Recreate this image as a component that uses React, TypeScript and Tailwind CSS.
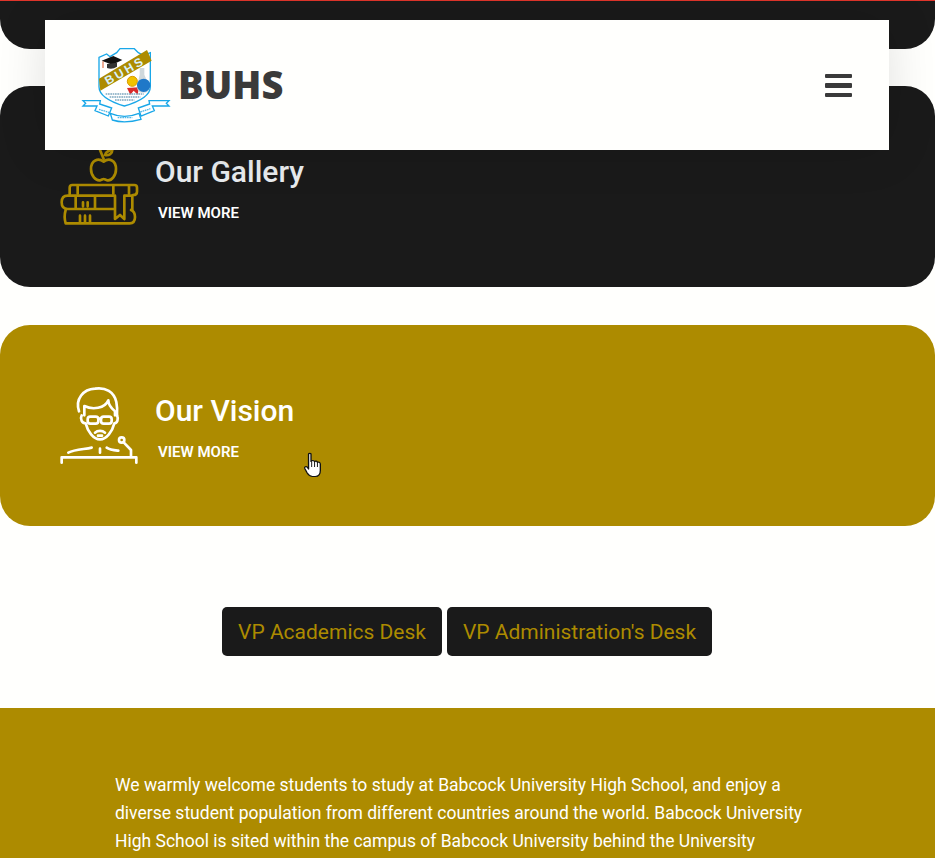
import { ReactNode } from "react";

const GOLD = "#ad8b00";

function BooksIcon() {
  return (
    <svg width="90" height="85" viewBox="0 -6 270 255" fill="none" stroke={GOLD} strokeWidth="8" strokeLinecap="round" strokeLinejoin="round">
      {/* apple */}
      <path d="M146 50C130 38 108 45 108 72C108 92 122 108 135 106C140 105 143 102 146 102C149 102 152 105 157 106C170 108 183 92 183 72C183 45 162 38 146 50Z" />
      <path d="M146 42L135 15M150 30C152 20 165 15 172 15C172 25 162 33 150 30Z" />
      {/* top book */}
      <path d="M44 148V128Q44 120 52 120H238Q246 120 246 128V140Q246 150 234 150M68 120V146M175 120V146M222 120V146" />
      {/* middle book */}
      <path d="M175 152H38Q20 152 20 172Q20 192 38 192H176M62 152V192M120 152V192M212 152H232V195M84 172V184M98 172V184" />
      {/* bookmark */}
      <path d="M180 152V222L195 210L208 222V152" />
      {/* bottom book */}
      <path d="M32 195Q26 215 32 235H224Q240 235 240 216Q240 200 228 195M75 212V235M90 212V235M105 212V235" />
    </svg>
  );
}

function TeacherIcon() {
  return (
    <svg width="90" height="85" viewBox="0 0 270 255" fill="none" stroke="#ffffff" strokeWidth="8" strokeLinecap="round" strokeLinejoin="round">
      <path d="M72 88C60 50 85 22 120 20C152 15 177 30 184 60C187 75 187 88 186 100" />
      <path d="M88 100V72C112 84 150 80 160 55C160 70 170 80 180 88V100" />
      <path d="M80 100C74 112 82 124 92 124C98 148 115 172 135 172C155 172 172 148 178 124C186 124 192 112 186 100" />
      <rect x="98" y="104" width="32" height="21" rx="8" />
      <rect x="138" y="104" width="32" height="21" rx="8" />
      <path d="M130 110H138" />
      <path d="M120 152C128 145 142 145 150 152M129 161H141" />
      <path d="M40 212C60 202 90 202 110 197M155 197C165 204 180 205 190 206M135 200V212" />
      <circle cx="200" cy="174" r="8" />
      <path d="M206 181L228 204V224" />
      <path d="M20 242V226H244V242" />
    </svg>
  );
}

function Crest() {
  return (
    <svg width="100" height="90" viewBox="0 0 300 270" fill="none">
      {/* shield */}
      <path d="M72 52L95 42L105 50L125 38L135 26H178L190 38L205 46L226 38V140C226 172 182 188 148 198C115 188 72 172 72 140Z" fill="#ffffff" stroke="#19a7e8" strokeWidth="4" />
      {/* band */}
      <path d="M72 116L216 30L230 62L76 152Z" fill={GOLD} />
      <text x="0" y="0" transform="translate(98 136) rotate(-30)" fill="#d9f2fb" fontFamily="Liberation Sans, sans-serif" fontSize="36" fontWeight="700" letterSpacing="8">BUHS</text>
      {/* cap */}
      <path d="M80 62L115 48L142 60L112 74Z" fill="#111111" />
      <path d="M96 72V84Q112 90 126 80V68Z" fill="#333333" />
      <path d="M84 64V84" stroke="#d8572a" strokeWidth="3" />
      {/* medal and flask */}
      <path d="M156 144L166 164L176 152L188 164L192 142Z" fill="#d92b2b" />
      <circle cx="172" cy="124" r="15" fill="#f2c200" stroke="#d89a00" strokeWidth="3" />
      <path d="M194 84H208V104L224 140Q224 158 204 158Q186 158 186 140L194 104Z" fill="#cfd8dc" />
      <circle cx="206" cy="136" r="20" fill="#1f78c8" />
      {/* lower text band */}
      <path d="M92 162H206M104 171H196M120 180H178" stroke="#7fa8c0" strokeWidth="4" strokeDasharray="5 2" />
      {/* ribbon */}
      <path d="M24 182H76L74 192L110 204L100 228L60 212L66 198H36L24 198L32 190Z" fill="#ffffff" stroke="#19a7e8" strokeWidth="4" />
      <path d="M282 182H222L224 192L190 204L198 228L238 212L232 198H270L282 198L274 190Z" fill="#ffffff" stroke="#19a7e8" strokeWidth="4" />
      <path d="M106 220Q148 238 192 220L198 238Q148 252 112 240Z" fill="#ffffff" stroke="#19a7e8" strokeWidth="4" />
      <path d="M72 208L104 218M128 233H172M196 216L226 206" stroke="#55b9e6" strokeWidth="4" strokeDasharray="5 2" />
    </svg>
  );
}

function HandCursor() {
  return (
    <svg width="20" height="26" viewBox="0 0 18 26" preserveAspectRatio="none" className="absolute left-[303px] top-[452px]">
      <path
        d="M5 2.2C5 1 7.2 1 7.2 2.2V9.5L7.8 9.2C8 8.2 10 8.2 10.2 9.5L10.5 9.6C11 8.8 12.8 9 13 10.4C13.6 9.8 15.6 10.2 15.6 12V18.5C15.6 22 14 24.5 11 24.5H8.5C6 24.5 5 23 3.8 21L1.6 16.5C1 15 2.8 14 3.8 15.2L5 17Z"
        fill="#ffffff"
        stroke="#111111"
        strokeWidth="1.2"
        strokeLinejoin="round"
      />
      <path d="M7.8 10V15M10.4 10V15M13 10.5V15" stroke="#111111" strokeWidth="0.9" />
    </svg>
  );
}

function Card({ bg, title, titleColor, icon }: { bg: string; title: string; titleColor: string; icon: ReactNode }) {
  return (
    <div className={`flex h-[201px] gap-[10px] rounded-[30px] pl-[55px] pt-[57px] ${bg}`}>
      {icon}
      <div className="pt-[10px]">
        <h3 className={`text-[30px] font-medium leading-[38px] ${titleColor}`}>{title}</h3>
        <a className="mt-[12px] block pl-[3px] text-[15px] font-semibold leading-[20px] text-white">VIEW MORE</a>
      </div>
    </div>
  );
}

export default function App() {
  return (
    <div className="relative h-[858px] overflow-hidden bg-[#fffffd] font-['Roboto',sans-serif]">
      <div className="h-[49px] rounded-b-[30px] border-t border-[#e0352b] bg-[#1a1a1a]" />

      <div className="mt-[37px]">
        <Card bg="bg-[#1a1a1a]" title="Our Gallery" titleColor="text-[#e9ecef]" icon={<BooksIcon />} />
      </div>
      <div className="mt-[38px]">
        <Card bg="bg-[#ad8b00]" title="Our Vision" titleColor="text-white" icon={<TeacherIcon />} />
      </div>

      <div className="mt-[81px] flex justify-center gap-[5px] pr-[1px]">
        <button className="h-[49px] w-[220px] rounded-[5px] bg-[#1a1a1a] pt-[2px] text-[21px] text-[#ad8b00]">VP Academics Desk</button>
        <button className="h-[49px] w-[265px] rounded-[5px] bg-[#1a1a1a] pt-[2px] text-[21px] text-[#ad8b00]">VP Administration's Desk</button>
      </div>

      <section className="mt-[52px] bg-[#ad8b00] px-[115px] pb-[40px] pt-[63px]">
        <p className="w-[700px] text-[17.5px] leading-[28px] text-white">
          We warmly welcome students to study at Babcock University High School, and enjoy a diverse student population from different countries around the world. Babcock University High School is sited within the campus of Babcock University behind the University
        </p>
      </section>

      <header className="absolute left-[45px] top-[20px] flex h-[130px] w-[844px] items-center bg-[#fffffd] shadow-[0_0_50px_rgba(0,0,0,0.12)]">
        <div className="ml-[30px] flex items-center">
          <Crest />
          <span className="mb-[2px] ml-[3px] font-['Open_Sans',sans-serif] text-[38px] font-extrabold text-[#3a3a3a]">BUHS</span>
        </div>
        <div className="ml-auto mr-[37px] flex w-[27px] flex-col gap-[5px]">
          <span className="h-[4px] rounded-[1px] bg-[#3a3a3a]" />
          <span className="h-[5px] rounded-[1px] bg-[#3a3a3a]" />
          <span className="h-[4px] rounded-[1px] bg-[#3a3a3a]" />
        </div>
      </header>

      <HandCursor />
    </div>
  );
}
